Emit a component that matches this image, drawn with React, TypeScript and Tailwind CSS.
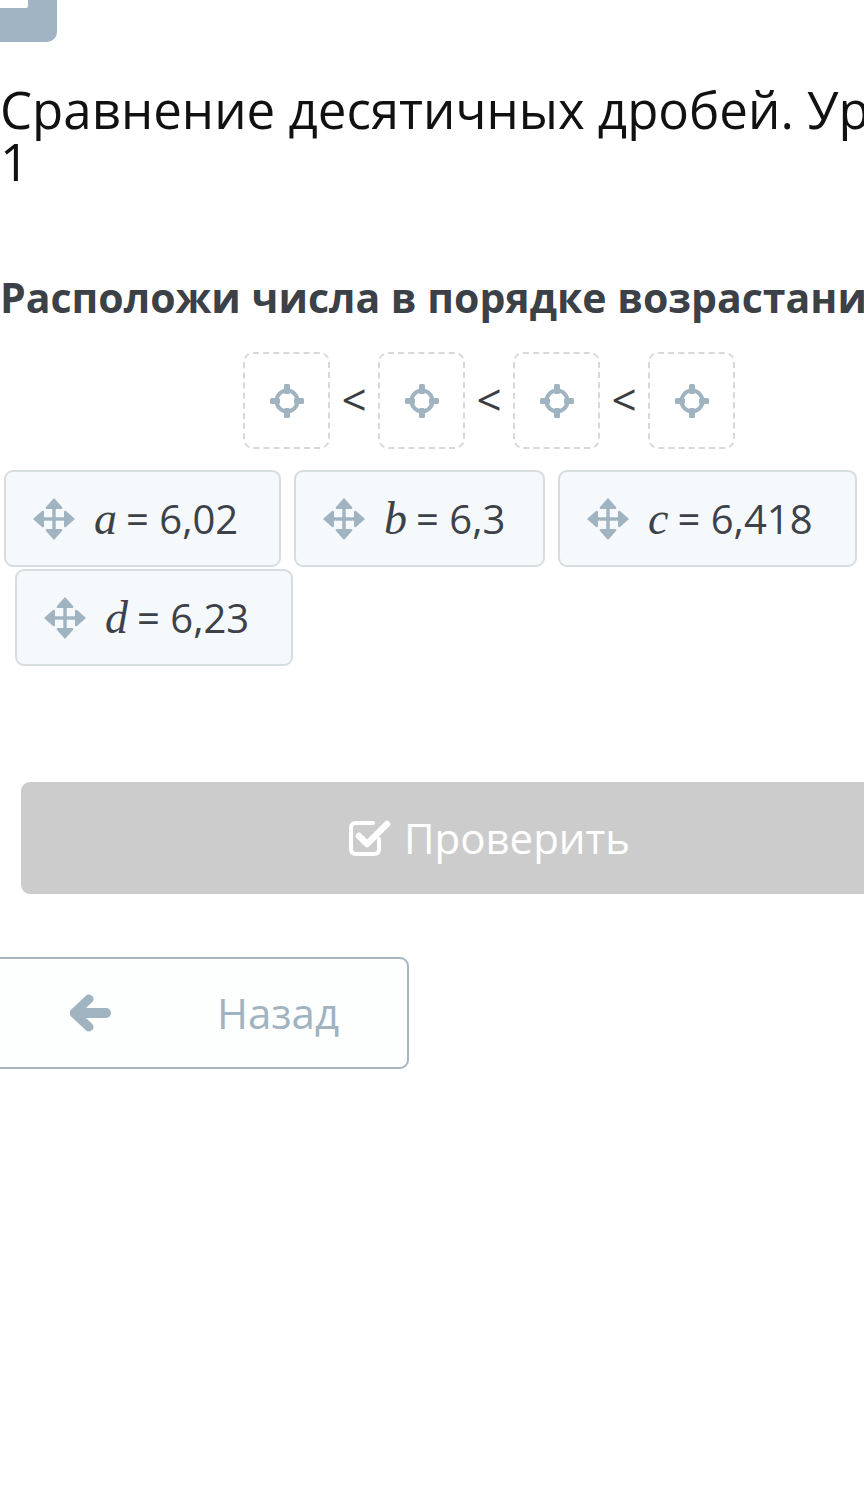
import React from "react";

const sans = "font-['Open_Sans',sans-serif]";

function Crosshair() {
  return (
    <svg width="38" height="38" viewBox="0 0 38 38" fill="none">
      <circle cx="19" cy="19" r="10.5" stroke="#a0b3c1" strokeWidth="4" />
      <rect x="16" y="2" width="6" height="10" rx="1.5" fill="#a0b3c1" />
      <rect x="16" y="26" width="6" height="10" rx="1.5" fill="#a0b3c1" />
      <rect x="2" y="16" width="10" height="6" rx="1.5" fill="#a0b3c1" />
      <rect x="26" y="16" width="10" height="6" rx="1.5" fill="#a0b3c1" />
    </svg>
  );
}

function MoveIcon() {
  return (
    <svg width="44" height="44" viewBox="0 0 44 44" fill="#a0b3c1">
      <rect x="20.3" y="8" width="3.4" height="28" />
      <rect x="8" y="20.3" width="28" height="3.4" />
      <path d="M22 1 L30 10 Q31 12 29 12 L15 12 Q13 12 14 10 Z" />
      <path d="M22 43 L30 34 Q31 32 29 32 L15 32 Q13 32 14 34 Z" />
      <path d="M1 22 L10 14 Q12 13 12 15 L12 29 Q12 31 10 30 Z" />
      <path d="M43 22 L34 14 Q32 13 32 15 L32 29 Q32 31 34 30 Z" />
    </svg>
  );
}

function CheckSquare() {
  return (
    <svg width="44" height="40" viewBox="0 0 44 40" fill="none">
      <path d="M31 21 V31 Q31 36 26 36 H8 Q3 36 3 31 V10 Q3 5 8 5 H25" stroke="#ffffff" strokeWidth="4" strokeLinecap="round" />
      <path d="M11 18 L19 26 L39 6" stroke="#ffffff" strokeWidth="6.5" strokeLinecap="round" strokeLinejoin="round" />
    </svg>
  );
}

function ArrowLeft() {
  return (
    <svg width="42" height="38" viewBox="0 0 42 38" fill="none">
      <path d="M19 5 L4 19 L19 33" stroke="#a0b3c1" strokeWidth="9" strokeLinecap="round" strokeLinejoin="round" />
      <path d="M7 19 H36" stroke="#a0b3c1" strokeWidth="10" strokeLinecap="round" />
    </svg>
  );
}

function Slot() {
  return (
    <div className="w-[87px] h-[97px] rounded-[10px] border-2 border-dashed border-[#d6d9dc] flex items-center justify-center">
      <Crosshair />
    </div>
  );
}

function Less() {
  return <div className={`${sans} w-[48px] text-center text-[44px] text-[#3a3d42] leading-none pb-[4px]`}>&lt;</div>;
}

function Card(props: { name: string; value: string; w: string }) {
  const { name, value, w } = props;
  return (
    <div className={`${w} h-[97px] rounded-[9px] border-2 border-[#d7dcdf] bg-[#f5f9fc] flex items-center pl-[26px] gap-[18px]`}>
      <MoveIcon />
      <div className="flex items-baseline text-[#3d4148] whitespace-nowrap">
        <span className="font-['Liberation_Serif',serif] italic text-[46px] leading-none">{name}</span>
        <span className={`${sans} text-[40px] leading-none ml-[9px]`}>= {value}</span>
      </div>
    </div>
  );
}

export default function App() {
  return (
    <div className="w-[864px] min-h-[1508px] overflow-hidden bg-white">
      <div className="w-[978px]">
        <div className="w-[57px] h-[42px] bg-[#a0b4c3] rounded-br-[10px]">
          <div className="w-[28px] h-[8px] bg-white rounded-br-[2px]" />
        </div>

        <h1 className={`${sans} mt-[41px] text-[51px] leading-[52px] text-[#111111] whitespace-nowrap`}>
          Сравнение десятичных дробей. Уровень
          <br />
          1
        </h1>

        <h2 className={`${sans} mt-[87px] font-bold text-[41px] leading-[46px] text-[#3c4047] whitespace-nowrap`}>
          Расположи числа в порядке возрастания
        </h2>

        <div className="mt-[32px] flex items-center justify-center">
          <Slot />
          <Less />
          <Slot />
          <Less />
          <Slot />
          <Less />
          <Slot />
        </div>

        <div className="mt-[21px] flex gap-[13px] ml-[4px]">
          <Card name="a" value="6,02" w="w-[277px]" />
          <Card name="b" value="6,3" w="w-[251px]" />
          <Card name="c" value="6,418" w="w-[299px]" />
        </div>
        <div className="mt-[2px] flex ml-[15px]">
          <Card name="d" value="6,23" w="w-[278px]" />
        </div>

        <div className="mt-[116px] mx-[21px] h-[112px] rounded-[9px] bg-[#cccccc] flex items-center justify-center gap-[12px]">
          <CheckSquare />
          <span className={`${sans} text-[42px] text-white leading-none`}>Проверить</span>
        </div>

        <div className="mt-[63px] -ml-[10px] w-[419px] h-[112px] rounded-[9px] border-2 border-[#a7b6c0] bg-[#fdfefe] flex items-center">
          <div className="ml-[78px]">
            <ArrowLeft />
          </div>
          <span className={`${sans} ml-[105px] text-[42px] text-[#a0b3c1] leading-none`}>Назад</span>
        </div>
      </div>
    </div>
  );
}
